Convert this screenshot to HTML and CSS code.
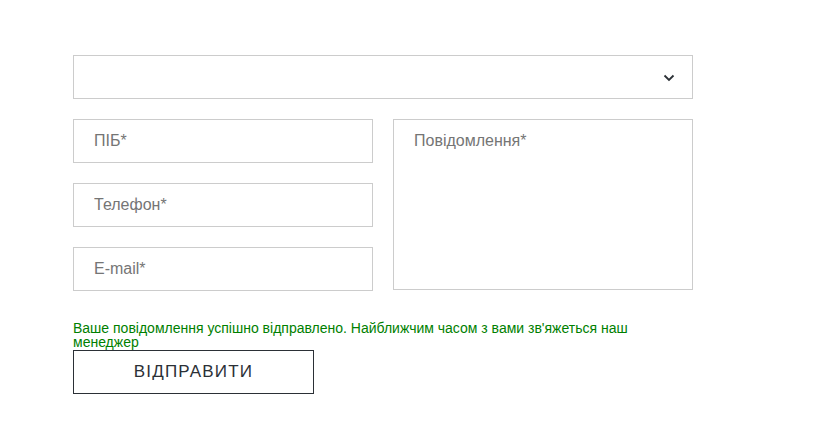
FILE: index.html
```
<!DOCTYPE html>
<html lang="uk">
<head>
<meta charset="utf-8">
<link rel="stylesheet" href="styles.css">
</head>
<body>
<form class="form">
  <div class="select">
    <svg class="chevron" width="12" height="8" viewBox="0 0 12 8"><path d="M1.5 1.5 L6 6 L10.5 1.5" fill="none" stroke="#2b3036" stroke-width="1.8"/></svg>
  </div>
  <div class="grid">
    <div class="col">
      <input class="field" type="text" placeholder="ПІБ*">
      <input class="field" type="text" placeholder="Телефон*">
      <input class="field" type="text" placeholder="E-mail*">
    </div>
    <textarea class="area" placeholder="Повідомлення*"></textarea>
  </div>
  <p class="msg">Ваше повідомлення успішно відправлено. Найближчим часом з вами зв'яжеться наш менеджер</p>
  <button class="btn" type="button">ВІДПРАВИТИ</button>
</form>
</body>
</html>
```
FILE: styles.css
```
html, body { margin: 0; padding: 0; background: #fff; }
body { font-family: "Liberation Sans", Arial, sans-serif; }
.form { width: 620px; padding: 55px 0 0 73px; }
.select {
  box-sizing: border-box; height: 44px; border: 1px solid #ccc;
  display: flex; align-items: center; justify-content: flex-end; padding-right: 17px;
}
.chevron { display: block; margin-top: 1px; }
.grid { display: flex; gap: 20px; margin-top: 20px; }
.col { display: flex; flex-direction: column; gap: 20px; width: 300px; }
.field, .area {
  box-sizing: border-box; width: 300px; border: 1px solid #ccc; margin: 0;
  font-family: "Liberation Sans", Arial, sans-serif; font-size: 16px; color: #333;
  padding: 0 20px; outline: none; background: #fff; border-radius: 0;
}
.field { height: 44px; }
.area { height: 171px; padding: 12px 20px; resize: none; }
.field::placeholder, .area::placeholder { color: #757575; opacity: 1; }
.msg { margin: 30px 0 0; font-size: 14px; line-height: 14px; color: #008000; }
.btn {
  display: block; box-sizing: border-box; width: 241px; height: 44px; margin-top: 1px;
  background: #fff; border: 1px solid #2b3036; color: #2b3036; border-radius: 0;
  font-family: "Liberation Sans", Arial, sans-serif; font-size: 17px; letter-spacing: 1.2px; padding: 0;
}
```
